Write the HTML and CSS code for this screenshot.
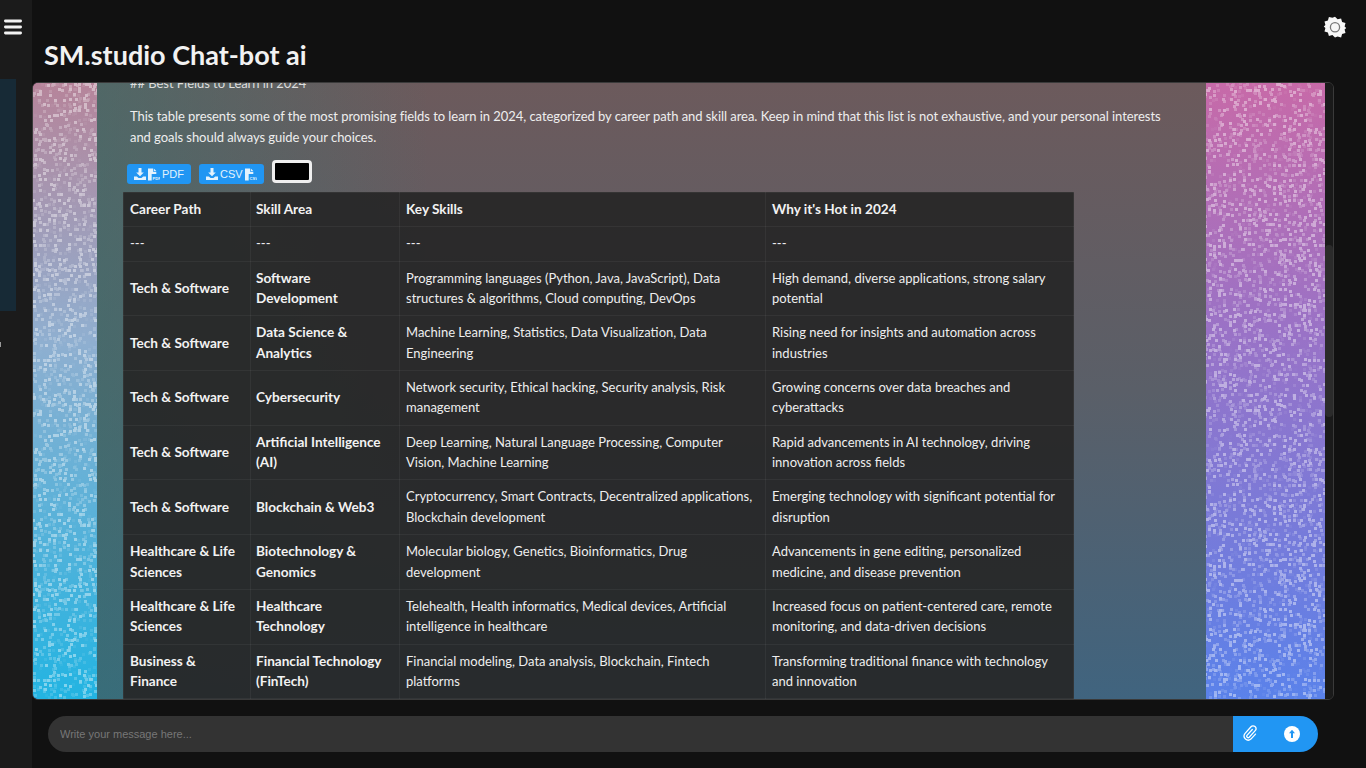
FILE: index.html
```html
<!DOCTYPE html>
<html>
<head>
    <title>SM.studio Chat-bot ai</title>
    <link rel="stylesheet" href="styles.css">
</head>
<body>
    <div class="sidebar">
        <button class="menu-btn" aria-label="Menu">
            <svg width="18" height="16" viewBox="0 0 18 16"><rect y="0.5" width="18" height="3" rx="1.4"/><rect y="6.5" width="18" height="3" rx="1.4"/><rect y="12.5" width="18" height="3" rx="1.4"/></svg>
        </button>
        <div class="history-peek"></div>
        <div class="history-dot"></div>
    </div>

    <div class="main">
        <div class="top-bar">
            <svg class="theme-icon" width="22" height="22" viewBox="0 0 22 22">
                <path d="M11 .8l2.600 2.500 3.500-.9 1 3.500 3.400 1-.9 3.600 1.600 1.500-1.600 1.500.9 3.500-3.400 1-1 3.500-3.500-.9L11 21.600l-2.600-2.500-3.500.9-1-3.500-3.400-1 .9-3.500-1.600-1.500 1.600-1.500-.9-3.600 3.400-1 1-3.500 3.500.9z"/>
                <circle cx="11" cy="11.200" r="4.600" fill="none" stroke="#777" stroke-width="1.300"/>
            </svg>
        </div>
        <h1 class="app-title">SM.studio Chat-bot ai</h1>

        <div class="chat-wrap">
            <div class="chat-box">
                <svg class="specks" width="100%" height="100%">
                    <filter id="speck" x="0" y="0" width="100%" height="100%">
                        <feTurbulence type="fractalNoise" baseFrequency="0.8" numOctaves="1" seed="7"/>
                        <feColorMatrix values="0 0 0 0 1  0 0 0 0 1  0 0 0 0 1  0 0 0 20 -13.700"/>
                        <feMorphology operator="dilate" radius="1"/>
                    </filter>
                    <rect width="100%" height="100%" filter="url(#speck)"/>
                </svg>

                <div class="message">
                    <p class="md-heading">## Best Fields to Learn in 2024</p>
                    <p class="intro">This table presents some of the most promising fields to learn in 2024, categorized by career path and skill area. Keep in mind that this list is not exhaustive, and your personal interests and goals should always guide your choices.</p>

                    <div class="table-tools">
                        <button class="tool-btn">
                            <svg width="12" height="12" viewBox="0 0 12 12"><path d="M4.500 0h3v4.500h2.300L6 8.300 2.200 4.500h2.300zM0 8.500h2.800L4.600 10h2.800l1.800-1.500H12V12H0z"/></svg>
                            <svg width="12" height="13" viewBox="0 0 13 13"><path d="M0 0h5.500v3.500H9V6H4v7H0zM6.300 0L9 2.700H6.300z"/><text x="4.800" y="12" class="file-tag">PDF</text></svg>
                            PDF
                        </button>
                        <button class="tool-btn">
                            <svg width="12" height="12" viewBox="0 0 12 12"><path d="M4.500 0h3v4.500h2.300L6 8.300 2.200 4.500h2.300zM0 8.500h2.800L4.600 10h2.800l1.800-1.500H12V12H0z"/></svg>
                            CSV
                            <svg width="12" height="13" viewBox="0 0 13 13"><path d="M0 0h5.500v3.500H9V6H4v7H0zM6.300 0L9 2.700H6.300z"/><text x="4.800" y="12" class="file-tag">CSV</text></svg>
                        </button>
                        <span class="color-swatch"></span>
                    </div>

                    <table class="result-table">
                        <thead>
                            <tr><th>Career Path</th><th>Skill Area</th><th>Key Skills</th><th>Why it's Hot in 2024</th></tr>
                        </thead>
                        <tbody>
                            <tr><td>---</td><td>---</td><td>---</td><td>---</td></tr>
                            <tr><td class="strong">Tech &amp; Software</td><td class="strong">Software Development</td><td>Programming languages (Python, Java, JavaScript), Data structures &amp; algorithms, Cloud computing, DevOps</td><td>High demand, diverse applications, strong salary potential</td></tr>
                            <tr><td class="strong">Tech &amp; Software</td><td class="strong">Data Science &amp; Analytics</td><td>Machine Learning, Statistics, Data Visualization, Data Engineering</td><td>Rising need for insights and automation across industries</td></tr>
                            <tr><td class="strong">Tech &amp; Software</td><td class="strong">Cybersecurity</td><td>Network security, Ethical hacking, Security analysis, Risk management</td><td>Growing concerns over data breaches and cyberattacks</td></tr>
                            <tr><td class="strong">Tech &amp; Software</td><td class="strong">Artificial Intelligence (AI)</td><td>Deep Learning, Natural Language Processing, Computer Vision, Machine Learning</td><td>Rapid advancements in AI technology, driving innovation across fields</td></tr>
                            <tr><td class="strong">Tech &amp; Software</td><td class="strong">Blockchain &amp; Web3</td><td>Cryptocurrency, Smart Contracts, Decentralized applications, Blockchain development</td><td>Emerging technology with significant potential for disruption</td></tr>
                            <tr><td class="strong">Healthcare &amp; Life Sciences</td><td class="strong">Biotechnology &amp; Genomics</td><td>Molecular biology, Genetics, Bioinformatics, Drug development</td><td>Advancements in gene editing, personalized medicine, and disease prevention</td></tr>
                            <tr><td class="strong">Healthcare &amp; Life Sciences</td><td class="strong">Healthcare Technology</td><td>Telehealth, Health informatics, Medical devices, Artificial intelligence in healthcare</td><td>Increased focus on patient-centered care, remote monitoring, and data-driven decisions</td></tr>
                            <tr><td class="strong">Business &amp; Finance</td><td class="strong">Financial Technology (FinTech)</td><td>Financial modeling, Data analysis, Blockchain, Fintech platforms</td><td>Transforming traditional finance with technology and innovation</td></tr>
                        </tbody>
                    </table>
                </div>
            </div>
            <div class="scroll-track"><div class="scroll-thumb"></div></div>
        </div>

        <div class="input-row">
            <input class="message-input" type="text" placeholder="Write your message here...">
            <div class="input-actions">
                <svg class="clip-icon" width="14" height="16" viewBox="0 0 14 16" fill="none" stroke="#fff" stroke-width="1.300" stroke-linecap="round"><path d="M9.300 4.500L4 10.300a1.500 1.500 0 0 0 2.200 2l6-6.700a2.800 2.800 0 0 0-4.200-3.800L1.900 8.600a4.100 4.100 0 0 0 6 5.500l4.600-5"/></svg>
                <svg width="16" height="16" viewBox="0 0 16 16"><circle cx="8" cy="8" r="8" fill="#fff"/><path d="M8 3.800L11 7.200H9V12H7V7.200H5z" fill="#2196f3"/></svg>
            </div>
        </div>
    </div>
</body>
</html>
```

FILE: styles.css
```css
* {
    box-sizing: border-box;
}

html, body {
    height: 100%;
}

body {
    margin: 0;
    display: flex;
    overflow: hidden;
    background-color: #111;
    color: #eee;
    font-family: "Lato", "Open Sans", Arial, sans-serif;
}

.sidebar {
    width: 32px;
    flex-shrink: 0;
    position: relative;
    background-color: #1b1b1b;
}

.menu-btn {
    display: block;
    width: 26px;
    height: 26px;
    margin: 14px 0 0 0;
    padding: 0 0 0 4px;
    background: none;
    border: none;
}

.menu-btn svg {
    display: block;
    fill: #f2f2f2;
}

.history-peek {
    position: absolute;
    left: 0;
    top: 79px;
    width: 16px;
    height: 232px;
    background-color: #172a36;
}

.history-dot {
    position: absolute;
    left: 0;
    top: 342px;
    width: 1px;
    height: 5px;
    background-color: #999;
}

.main {
    flex: 1;
    min-width: 0;
    display: flex;
    flex-direction: column;
}

.top-bar {
    display: flex;
    justify-content: flex-end;
    height: 38px;
    padding: 16px 20px 0 0;
}

.theme-icon {
    fill: #f7f7f7;
    overflow: visible;
}

.app-title {
    margin: 0 0 0 12px;
    height: 44px;
    font-size: 27px;
    line-height: 34px;
    font-weight: 700;
    color: #f2f2f2;
}

.chat-wrap {
    display: flex;
    width: 1302px;
    height: 618px;
    border: 1px solid #3a3a3a;
    border-radius: 6px;
    overflow: hidden;
    flex-shrink: 0;
}

.chat-box {
    flex: 1;
    min-width: 0;
    position: relative;
    overflow: hidden;
    padding: 0 119px 0 64px;
    background: linear-gradient(180deg, #c76aa8 0%, #9a72c6 40%, #5a82ea 100%);
}

.chat-box::before {
    content: "";
    position: absolute;
    inset: 0;
    background: linear-gradient(180deg, #b6849a 0%, #8fafd0 42%, #22b4e2 100%);
    -webkit-mask-image: linear-gradient(90deg, #000 10%, transparent 90%);
    mask-image: linear-gradient(90deg, #000 10%, transparent 90%);
}

.specks {
    position: absolute;
    left: 0;
    top: 0;
    opacity: 0.42;
}

.message {
    position: relative;
    height: 100%;
    overflow: hidden;
    padding: 0 28px 0 33px;
    background:
        linear-gradient(90deg, rgba(47, 120, 115, 0.45), rgba(47, 120, 115, 0) 30%),
        linear-gradient(180deg, #6c5a5c 0%, #5a5f68 50%, #40647f 100%);
    font-size: 13px;
    line-height: 21px;
}

.md-heading {
    margin: -10px 0 0;
    color: #ddd;
    letter-spacing: -0.05px;
}

.intro {
    margin: 12px 0 0;
    color: #eee;
    letter-spacing: -0.05px;
}

.table-tools {
    display: flex;
    align-items: center;
    gap: 8px;
    height: 24px;
    margin: 11px 0 9px -3px;
}

.tool-btn {
    display: flex;
    align-items: center;
    justify-content: center;
    gap: 2px;
    height: 20px;
    padding: 0 7px;
    margin-top: 6px;
    background-color: #2196f3;
    color: #e3f2fd;
    border: none;
    border-radius: 3px;
    font-family: "Liberation Sans", Arial, sans-serif;
    font-size: 11px;
}

.tool-btn svg {
    fill: #e3f2fd;
}

.file-tag {
    font-size: 4.500px;
    font-weight: 700;
    fill: #e3f2fd;
}

.color-swatch {
    width: 40px;
    height: 23px;
    background-color: #000;
    border: 3px solid #efefef;
    border-radius: 4px;
}

.result-table {
    width: 951px;
    margin-left: -7px;
    border-collapse: collapse;
    table-layout: fixed;
    font-size: 13px;
    line-height: 20.4px;
    background-color: rgba(38, 38, 38, 0.92);
}

.result-table th:nth-child(1) { width: 127px; }
.result-table th:nth-child(2) { width: 149px; }
.result-table th:nth-child(3) { width: 366px; }

.result-table th,
.result-table td {
    padding: 6px 6px 6.900px;
    text-align: left;
    vertical-align: middle;
    border: 1px solid rgba(255, 255, 255, 0.05);
    color: #eee;
    font-weight: 400;
}

.result-table tr > :nth-child(2) {
    padding-left: 5px;
}

.result-table th,
.result-table .strong {
    font-size: 13.6px;
    font-weight: 700;
    color: #f2f2f2;
}

.scroll-track {
    width: 8px;
    flex-shrink: 0;
    padding-top: 162px;
    background-color: #1a1a1a;
}

.scroll-thumb {
    height: 172px;
    background-color: #2b2b2b;
    border-radius: 4px;
}

.input-row {
    display: flex;
    width: 1270px;
    height: 36px;
    margin: 16px 0 0 16px;
    border-radius: 18px;
    overflow: hidden;
    flex-shrink: 0;
}

.message-input {
    flex: 1;
    min-width: 0;
    padding: 0 12px;
    background-color: #333;
    border: none;
    outline: none;
    color: #eee;
    font-family: "Liberation Sans", Arial, sans-serif;
    font-size: 11px;
}

.message-input::placeholder {
    color: #777;
}

.input-actions {
    display: flex;
    align-items: center;
    gap: 27px;
    width: 85px;
    padding-left: 10px;
    background-color: #2196f3;
}

.clip-icon {
    margin-top: -3px;
}
```
